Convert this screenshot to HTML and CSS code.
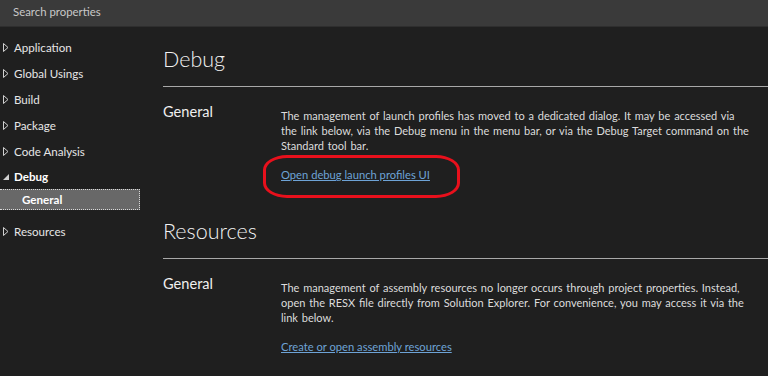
FILE: index.html
```html
<!DOCTYPE html>
<html lang="en">
<head>
    <meta charset="UTF-8">
    <meta name="viewport" content="width=device-width, initial-scale=1.0">
    <title>Project Properties</title>
    <link rel="stylesheet" href="styles.css">
</head>
<body>
    <div class="search">Search properties</div>
    <div class="main">
        <ul class="nav">
            <li class="nav-item"><svg class="arrow" viewBox="0 0 6 9"><path d="M0.5 0.5 L5 4.5 L0.5 8.5 Z" /></svg>Application</li>
            <li class="nav-item"><svg class="arrow" viewBox="0 0 6 9"><path d="M0.5 0.5 L5 4.5 L0.5 8.5 Z" /></svg>Global Usings</li>
            <li class="nav-item"><svg class="arrow" viewBox="0 0 6 9"><path d="M0.5 0.5 L5 4.5 L0.5 8.5 Z" /></svg>Build</li>
            <li class="nav-item"><svg class="arrow" viewBox="0 0 6 9"><path d="M0.5 0.5 L5 4.5 L0.5 8.5 Z" /></svg>Package</li>
            <li class="nav-item"><svg class="arrow" viewBox="0 0 6 9"><path d="M0.5 0.5 L5 4.5 L0.5 8.5 Z" /></svg>Code Analysis</li>
            <li class="nav-item open"><svg class="arrow" viewBox="0 0 6 9"><path d="M6 2 L6 8 L0 8 Z" /></svg>Debug</li>
            <li class="nav-sub selected">General</li>
            <li class="nav-item"><svg class="arrow" viewBox="0 0 6 9"><path d="M0.5 0.5 L5 4.5 L0.5 8.5 Z" /></svg>Resources</li>
        </ul>

        <div class="content">
            <section class="page">
                <h1>Debug</h1>
                <div class="group">
                    <h2>General</h2>
                    <div class="group-body">
                        <p>The management of launch profiles has moved to a dedicated dialog. It may be accessed via the link below, via the Debug menu in the menu bar, or via the Debug Target command on the Standard tool bar.</p>
                        <span class="marked"><a href="#">Open debug launch profiles UI</a><span class="ring"></span></span>
                    </div>
                </div>
            </section>

            <section class="page">
                <h1>Resources</h1>
                <div class="group">
                    <h2>General</h2>
                    <div class="group-body">
                        <p>The management of assembly resources no longer occurs through project properties. Instead, open the RESX file directly from Solution Explorer. For convenience, you may access it via the link below.</p>
                        <a href="#">Create or open assembly resources</a>
                    </div>
                </div>
            </section>
        </div>
    </div>
</body>
</html>
```

FILE: styles.css
```css
body {
    margin: 0;
    padding: 0;
    background-color: #1f1f1f;
    color: #dcdcdc;
    font-family: Lato, "Open Sans", sans-serif;
    font-size: 11.2px;
    overflow: hidden;
}

.search {
    height: 26px;
    line-height: 24px;
    padding-left: 13px;
    background-color: #3a3a3a;
    border-bottom: 1px solid #2e2e2e;
    color: #c8c8c8;
    font-size: 11.4px;
}

.main {
    display: flex;
}

.nav {
    list-style: none;
    margin: 0;
    padding: 7px 0 0 0;
    width: 140px;
    flex-shrink: 0;
    font-size: 11.6px;
}

.nav-item {
    display: flex;
    align-items: center;
    height: 26px;
    color: #e6e6e6;
}

.nav-item .arrow {
    width: 6px;
    height: 9px;
    margin: 0 5px 0 3px;
    fill: none;
    stroke: #d0d0d0;
    stroke-width: 1;
}

.nav-item.open {
    height: 25px;
    font-weight: bold;
    color: #fff;
}

.nav-item.open .arrow {
    fill: #d0d0d0;
    stroke: none;
}

.nav-sub {
    height: 19px;
    line-height: 19px;
    padding-left: 22px;
    font-weight: bold;
    color: #fff;
}

.nav-sub.selected {
    background-color: #686868;
    border: 1px dotted #d8d8d8;
    border-left: none;
    margin-bottom: 8px;
}

.content {
    flex: 1;
    padding-left: 23px;
}

.page h1 {
    margin: 0;
    padding: 18px 0 13px 0;
    font-size: 21.5px;
    font-weight: 300;
    line-height: 28px;
    color: #f2f2f2;
    border-bottom: 1px solid #a8a8a8;
}

.group {
    display: flex;
    padding: 15px 0 17px 0;
}

.group h2 {
    width: 118px;
    flex-shrink: 0;
    margin: 0;
    font-size: 14.6px;
    font-weight: normal;
    line-height: 20px;
    color: #f0f0f0;
}

.group-body {
    width: 470px;
    padding-top: 6px;
}

.group-body p {
    margin: 0 0 14px 0;
    font-size: 11px;
    line-height: 15px;
    word-spacing: 1px;
}

.group-body a {
    display: inline-block;
    line-height: 15px;
    color: #6ea3d6;
    text-decoration: underline;
}

.marked {
    position: relative;
    display: inline-block;
}

.ring {
    position: absolute;
    left: -18px;
    top: -12px;
    width: 191px;
    height: 37px;
    border: 3px solid #e8101c;
    border-radius: 24px / 15px;
}
```
